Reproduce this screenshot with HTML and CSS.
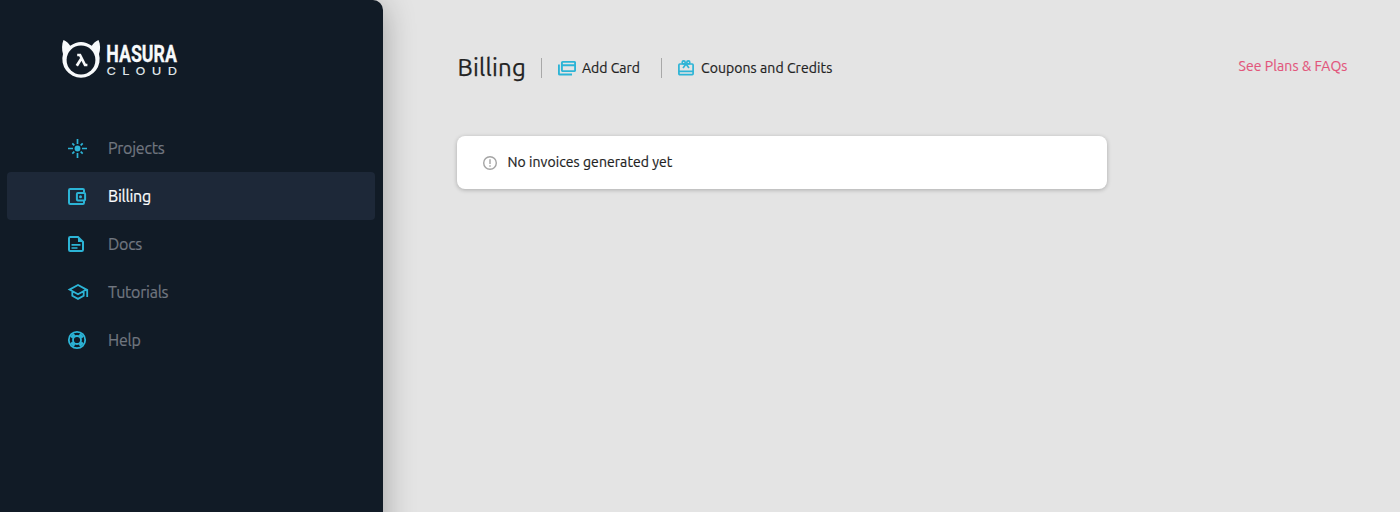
FILE: index.html
```html
<!DOCTYPE html>
<html lang="en">
<head>
<meta charset="utf-8">
<title>Billing</title>
<link rel="stylesheet" href="styles.css">
</head>
<body>
<div class="app">
  <aside class="sidebar">
    <svg class="logo" width="124" height="42" viewBox="0 0 124 42" role="img" aria-label="Hasura Cloud">
      <path class="logo-fill" d="M1.500 2C4 3.200 6.800 5 8.200 7.800Q19 .2 29.800 7.800C31.200 5 34 3.200 36.500 2C38.500 6 38.600 12 37 16A18.700 18.700 0 1 1 1 16C-.3 12-.3 6 1.500 2Z"/>
      <circle class="logo-hole" cx="19" cy="22" r="14.400"/>
      <path class="logo-lambda" d="M15.200 17h2.800l5 10h2.400M19.200 20.800l-4.400 7"/>
      <text class="logo-name" x="44.300" y="24.200" textLength="70.500" lengthAdjust="spacingAndGlyphs">HASURA</text>
      <g transform="translate(44.500 36.500) scale(1.18 1)"><text class="logo-sub" textLength="59.800">CLOUD</text></g>
    </svg>
    <nav class="nav">
      <a class="item"><svg class="icon" viewBox="0 0 24 24"><circle class="solid" cx="11.500" cy="12.500" r="2.900"/><path class="fine" d="M11.500 3v5M11.500 17v5M2 12.500h5M16 12.500h5M6.300 7.300l2 2M14.700 15.700l2 2M16.700 7.300l-2 2M8.300 15.700l-2 2"/></svg><span class="label">Projects</span></a>
      <a class="item active"><svg class="icon" viewBox="0 0 24 24"><path d="M18 8V6.200Q18 5 16.800 5H4.200Q3 5 3 6.200v12.600Q3 20 4.200 20h12.600Q18 20 18 18.800V17"/><rect x="10.900" y="9" width="8.200" height="7.500" rx="1"/><circle class="solid" cx="14.500" cy="12.700" r="1.500"/></svg><span class="label">Billing</span></a>
      <a class="item"><svg class="icon" viewBox="0 0 24 24"><path d="M4.200 5H12l5 5v7.800q0 1.200-1.200 1.200H4.200Q3 19 3 17.800V6.200Q3 5 4.200 5Z"/><path class="fine" d="M5.500 12.800h9M5.500 16h6"/><path class="solid" d="M12 5l5 5h-5Z"/></svg><span class="label">Docs</span></a>
      <a class="item"><svg class="icon thin" viewBox="0 0 24 24"><path d="M3.500 9.600L12 5l8.500 4.600L12 14.200ZM6.300 11.200v4.500l5.700 3.200 5.700-3.200v-4.500M21.200 9.500V17"/></svg><span class="label">Tutorials</span></a>
      <a class="item"><svg class="icon thin" viewBox="0 0 24 24"><circle cx="11" cy="12" r="8.200"/><circle cx="11" cy="12" r="4"/><path class="wedge" d="M5.800 6.800l2 2M16.200 6.800l-2 2M5.800 17.200l2-2M16.200 17.200l-2-2"/></svg><span class="label">Help</span></a>
    </nav>
  </aside>
  <main class="main">
    <header class="header">
      <h1 class="title">Billing</h1>
      <a class="action add"><svg class="action-icon" width="18" height="16" viewBox="0 0 18 16"><rect x="3.900" y="1.900" width="13.200" height="9.200" rx=".8"/><path d="M4 5.300h13M.9 4.500v9.100q0 .9.900.9H14"/></svg><span>Add Card</span></a>
      <a class="action coupons"><svg class="action-icon" width="16" height="16" viewBox="0 0 16 16"><rect x=".9" y="4" width="14.200" height="10.600" rx=".9"/><path d="M1 11.300h14M8 4L5 8M8 4l3 4"/><circle cx="5.700" cy="2.400" r="1.500"/><circle cx="10.300" cy="2.400" r="1.500"/></svg><span>Coupons and Credits</span></a>
      <a class="plans">See Plans &amp; FAQs</a>
    </header>
    <section class="card">
      <svg class="info" width="14" height="14" viewBox="0 0 14 14"><circle cx="7" cy="7" r="6.300"/><path d="M7 3.300v4.600M7 9.200v1.500"/></svg>
      <span class="empty">No invoices generated yet</span>
    </section>
  </main>
</div>
</body>
</html>
```
FILE: styles.css
```css
* { box-sizing: border-box; }
body { margin: 0; background: #e4e4e4; color: #222; font-family: Ubuntu, "Noto Sans", sans-serif; }
.app { display: flex; height: 100vh; overflow: hidden; }
.sidebar { width: 383px; height: calc(100vh + 40px); flex: none; padding: 38px 8px 0 7px; background: #111b26; border-top-right-radius: 10px; box-shadow: 0 4px 32px rgba(0, 0, 0, .3); }
.logo { display: block; margin-left: 55px; overflow: visible; }
.logo-fill { fill: #f8fafb; }
.logo-hole { fill: #111b26; }
.logo-lambda { fill: none; stroke: #f8fafb; stroke-width: 2.700; }
.logo-name { fill: #f8fafb; stroke: #f8fafb; stroke-width: .3px; font: bold 23px Roboto, sans-serif; }
.logo-sub { fill: #dfe3e6; font: 500 11px Inter, sans-serif; }
.nav { margin-top: 44px; }
.item { display: flex; align-items: center; height: 48px; padding-left: 59px; border-radius: 4px; color: #717780; font-size: 16px; line-height: 24px; white-space: nowrap; }
.item.active { background: #1d2838; color: #fff; }
.label { letter-spacing: -.25px; -webkit-text-stroke: .2px currentColor; }
.icon { width: 24px; height: 24px; margin-right: 18px; fill: none; stroke: #2cb4d6; stroke-width: 2; }
.icon.thin { stroke-width: 1.800; }
.icon .fine { stroke-width: 1.700; }
.icon .solid { fill: #2cb4d6; stroke: none; }
.icon .wedge { stroke-width: 4.500; }
.main { flex: 1; padding: 50px 52px 0 74px; }
.header { display: flex; align-items: center; height: 36px; white-space: nowrap; }
.title { width: 84px; margin: 0; padding-left: .6px; font-size: 24px; font-weight: 400; line-height: 36px; letter-spacing: .2px; -webkit-text-stroke: .25px currentColor; }
.action { display: flex; align-items: center; height: 20px; padding-left: 16px; border-left: 1px solid #a8a8a8; font-size: 14px; line-height: 20px; -webkit-text-stroke: .2px currentColor; }
.add { width: 120px; }
.action-icon { margin-right: 6px; fill: none; stroke: #2cb4d6; stroke-width: 1.900; }
.coupons { letter-spacing: .08px; }
.coupons .action-icon { margin-right: 7px; stroke-width: 1.700; }
.plans { margin-left: auto; padding: 0 .5px 4px 0; color: #e2557b; font-size: 14px; line-height: 20px; letter-spacing: .08px; -webkit-text-stroke: .15px currentColor; }
.card { display: flex; align-items: center; width: 650px; height: 53px; margin-top: 50px; padding-left: 26px; border-radius: 8px; background: #fff; box-shadow: 0 1px 4px rgba(0, 0, 0, .25); font-size: 14px; line-height: 20px; }
.empty { margin-bottom: 2px; letter-spacing: .07px; -webkit-text-stroke: .2px currentColor; }
.info { margin-right: 10.500px; fill: none; stroke: #a4a4a4; stroke-width: 1.400; }
```
